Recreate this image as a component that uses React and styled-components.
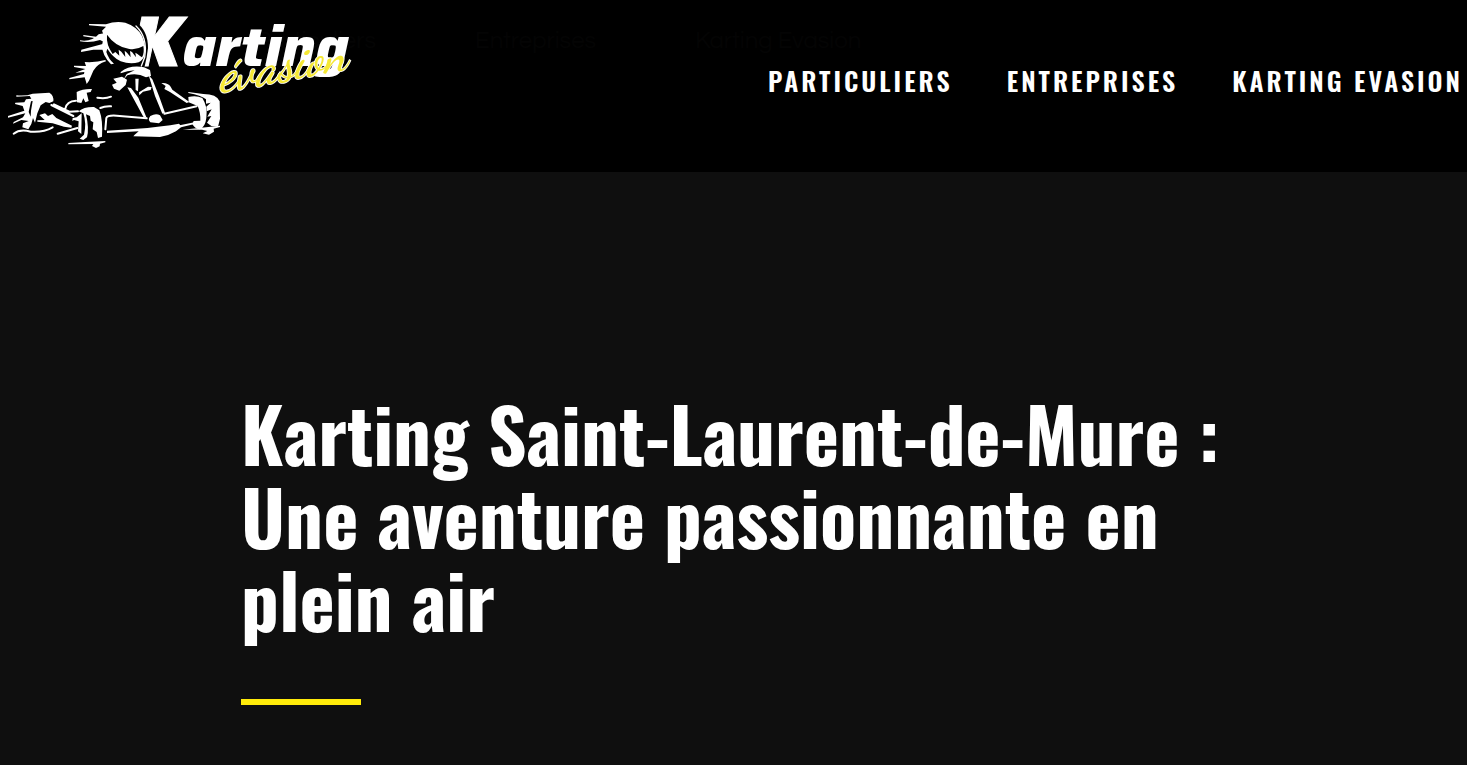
import React from "react";
import styled, { createGlobalStyle } from "styled-components";

const Global = createGlobalStyle`
  *, *::before, *::after { box-sizing: border-box; }
  body { margin: 0; background: #0f0f0f; color: #fff; font-family: "Oswald", "Roboto Condensed", sans-serif; overflow-x: hidden; }
`;

const Header = styled.header`
  position: relative;
  display: flex;
  justify-content: space-between;
  align-items: flex-start;
  height: 172px;
  background: #000;
`;

const FirstMenu = styled.nav`
  position: absolute;
  top: 28px;
  left: 256px;
  display: flex;
  gap: 99px;
`;

const FirstMenuLink = styled.a`
  color: #040404;
  font: 400 24px/26px "Questrial", "Montserrat", "Inter", sans-serif;
  text-decoration: none;
`;

const LogoLink = styled.a`
  position: relative;
  flex: none;
  display: block;
`;

const LogoArt = styled.svg`
  display: block;
  width: 370px;
  height: 160px;
`;

const MainMenu = styled.nav`
  position: relative;
  display: flex;
  gap: 54px;
  padding: 62px 4px 0 0;
`;

const MainMenuLink = styled.a`
  color: #fff;
  font-size: 26px;
  font-weight: 600;
  line-height: 38px;
  letter-spacing: 3px;
  text-decoration: none;
  text-transform: uppercase;
  white-space: nowrap;
`;

const Hero = styled.main`
  max-width: 985px;
  margin: 0 auto;
  padding: 219px 0 60px;
`;

const Title = styled.h1`
  margin: 0;
  font-size: 75px;
  font-weight: 700;
  line-height: 83px;
`;

const Accent = styled.hr`
  width: 120px;
  height: 6px;
  margin: 59px 0 0;
  border: 0;
  background: #ffeb0a;
`;

const MENU = ["Particuliers", "Entreprises", "Karting Evasion"];

function Logo() {
  return (
    <LogoArt viewBox="0 0 1110 480" role="img" aria-label="Karting évasion">
      <g fill="#fff" fontFamily='"Saira", "DejaVu Sans", sans-serif' fontStyle="italic">
        <text x="396" y="198" fontSize="212" fontWeight="900" stroke="#fff" strokeWidth="3">K</text>
        <text x="548" y="198" fontSize="170" fontWeight="800">arting</text>
      </g>
      <path fill="#000" d="M380 60 L408 66 Q444 92 444 144 L440 172 L432 208 L390 208 Z" />
      <g fill="#fff">
        {/* helmet */}
        <path d="M267 72 L318 73 Q346 62 376 68 Q412 80 426 108 Q440 140 434 164 Q430 180 416 187 Q390 194 362 184 Q338 172 322 146 L319 156 Q326 178 342 191 L333 193 Q306 166 306 136 L312 108 L306 92 L318 80 L267 76 Z" />
        <path fill="#000" d="M321 104 Q346 140 388 147 Q408 151 430 138 Q434 158 426 172 L420 168 Q412 160 406 158 L408 172 L396 156 L390 153 L392 172 L381 158 L374 152 L376 171 L364 155 L356 149 L358 167 L346 156 L338 162 Q318 134 321 104 Z" />
        <path d="M240 121 Q276 126 296 103 L312 100 L312 126 L300 120 Q270 130 240 124 Z M250 105 L300 112 L306 118 L250 109 Z M244 149 L308 132 L315 149 L280 149 L243 156 Z" />
        {/* shoulder streaks */}
        <path d="M254 186 Q290 188 316 180 L318 184 Q292 192 280 212 L267 242 L260 252 L254 232 L208 238 L208 234 L252 222 L253 216 L226 218 L256 207 L222 201 L222 197 L258 198 Z" />
        {/* collar and glove */}
        <path d="M362 216 Q390 194 432 202 L450 210 L453 228 L438 232 Q412 218 382 226 L370 240 L380 222 L404 211 Q382 212 362 220 Z M340 236 L366 230 L381 239 L377 255 L358 272 L342 266 L336 254 L350 248 Z" />
        {/* steering column */}
        <path d="M406 236 L416 236 L414 274 L407 270 Z M417 277 L444 260 L455 261 L452 270 L429 275 L418 286 Z M382 262 L393 264 L415 293 L440 354 L430 350 Z M446 226 L457 238 L477 288 L495 338 L487 341 L465 288 Z" />
        <path d="M451 348 Q468 338 480 346 L488 360 L477 370 L451 367 Q442 358 451 348 Z M484 249 Q503 247 512 260 L517 269 L568 306 L560 309 L510 276 L493 267 L497 258 Z" />
        {/* rear left wheel */}
        <path d="M49 286 Q78 289 98 281 L148 278 Q162 286 160 304 L148 309 L137 306 L122 316 L112 340 L105 368 L99 354 L94 372 L85 388 L67 382 L69 370 L86 363 L64 360 L39 371 L41 366 L69 352 L76 340 L24 353 L24 348 L73 332 L68 318 L45 312 L46 308 L73 307 L78 298 L94 296 L89 288 L49 290 Z" />
        <path fill="#000" d="M93 304 L98 303 L93 332 L92 350 L86 336 Z" />
        <path d="M118 345 L135 340 L144 348 L157 342 L169 354 L216 377 L214 383 L192 380 L158 370 L112 365 L112 361 L134 360 Z" />
        {/* engine block */}
        <path d="M230 276 Q248 266 276 267 L272 276 L260 278 L266 303 L256 307 L250 295 L244 309 L231 307 Z" />
        {/* front left wheel */}
        <path d="M236 334 Q252 320 282 321 L298 331 Q309 360 306 410 L294 414 L290 396 L278 388 L280 367 L272 362 L270 348 L258 343 Q268 386 261 412 L250 420 L239 416 L252 404 Q260 370 250 340 Z" />
        <path d="M230 352 L245 340 L244 402 L234 394 L236 364 L222 360 L217 363 L218 354 Z" />
        <path d="M205 429 L256 426 L316 423 L316 427 L300 431 L299 439 L288 444 L276 438 L280 432 L205 433 Z" />
        {/* front bodywork */}
        <path d="M321 392 L400 387 Q490 380 537 371 L545 380 L528 394 Q504 408 480 411 L400 409 L404 404 L416 394 L321 399 Z" />
        <path d="M539 376 L587 366 L587 371 L543 382 Z" />
        {/* front right wheel */}
        <path d="M565 291 Q590 286 607 294 Q624 320 619 354 Q616 380 600 388 Q584 386 577 372 L581 363 L601 362 Q602 338 593 318 L566 307 Z" />
        <path d="M565 276 L610 282 Q650 282 659 304 L660 356 L654 380 L634 378 L621 368 L634 348 L622 350 L635 328 L620 334 L619 320 L632 308 L618 311 L618 298 Q604 286 565 279 Z" />
        <path d="M548 389 L660 377 L660 381 L641 386 L642 395 L627 404 L608 400 L622 393 L606 389 Z" />
      </g>
      <g fill="none" stroke="#fff" strokeWidth="6" strokeLinecap="round">
        <path d="M408 78 Q444 112 434 172 L424 198" strokeWidth="4" />
        <path d="M162 313 L208 335 L234 334 M196 326 Q200 303 228 302 M154 315 L220 348" />
        <path d="M292 293 Q316 297 333 290 M301 324 Q314 318 333 319" />
        <path d="M316 388 L319 354 Q322 345 350 347 L440 355 M493 341 L590 319" />
        <path d="M41 401 Q60 386 92 395 Q130 398 158 382 M173 401 L232 384" />
      </g>
      <text
        transform="translate(662 274) rotate(-10)"
        fill="#f5e834"
        stroke="#fff"
        strokeWidth="5"
        paintOrder="stroke"
        fontFamily='"Dancing Script", "Marck Script", "Lato", sans-serif'
        fontStyle="italic"
        fontWeight="600"
        fontSize="148"
      >
        évasion
      </text>
    </LogoArt>
  );
}

export default function App() {
  return (
    <>
      <Global />
      <Header>
        <FirstMenu aria-label="Menu">
          {MENU.map((label) => (
            <FirstMenuLink href="#" key={label}>{label}</FirstMenuLink>
          ))}
        </FirstMenu>
        <LogoLink href="#">
          <Logo />
        </LogoLink>
        <MainMenu aria-label="Menu principal">
          {MENU.map((label) => (
            <MainMenuLink href="#" key={label}>{label}</MainMenuLink>
          ))}
        </MainMenu>
      </Header>
      <Hero>
        <Title>Karting Saint-Laurent-de-Mure : Une aventure passionnante en plein air</Title>
        <Accent />
      </Hero>
    </>
  );
}
